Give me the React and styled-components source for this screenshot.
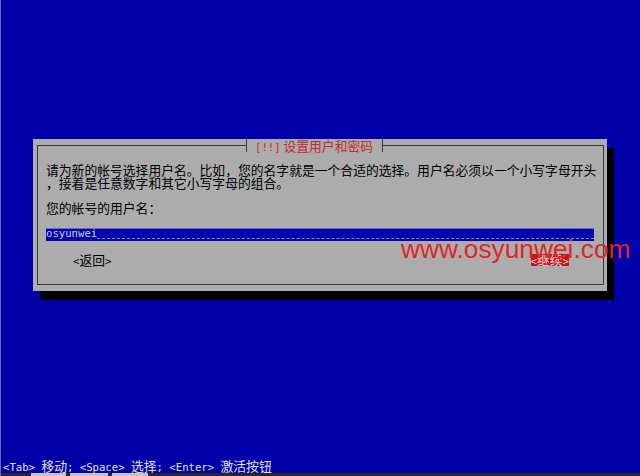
import React from "react";
import styled, { createGlobalStyle } from "styled-components";

const GlobalStyle = createGlobalStyle`
  html, body {
    margin: 0;
    padding: 0;
    background: #0000a8;
  }
  * {
    box-sizing: border-box;
  }
`;

const CJK = `"Noto Sans CJK SC", "Noto Sans", sans-serif`;
const MONO = `"DejaVu Sans Mono", "Liberation Mono", monospace`;

const Page = styled.div`
  position: relative;
  width: 640px;
  height: 476px;
  overflow: hidden;
  background: #0000a8;
  border-left: 1px solid #6c6ca0;
  display: flex;
  flex-direction: column;
  font-family: ${CJK};
  font-size: 12.8px;
  line-height: 12.8px;
`;

const Dialog = styled.div`
  margin: 139px 0 0 32px;
  width: 574px;
  background: #acacac;
  padding: 6px 3px 6px 4px;
  box-shadow: 7px 9px 0 #000;
`;

const Frame = styled.div`
  position: relative;
  border: 1px solid #3a3a3a;
  padding: 18px 9px 18px 8px;
`;

/* title sits over the top border line, like a legend */
const Title = styled.div`
  position: absolute;
  top: -7px;
  left: 208px;
  height: 13px;
  padding: 0 9px 0 8px;
  background: #acacac;
  border-left: 1px solid #3a3a3a;
  border-right: 1px solid #3a3a3a;
  color: #c42a2a;
  white-space: nowrap;
  line-height: 13px;
`;

const Mono = styled.span`
  font-family: ${MONO};
  font-size: 10.63px;
`;

const Text = styled.div`
  color: #000;
  white-space: nowrap;
  margin-bottom: ${p => (p.$gap ? "12.8px" : "0")};
`;

const Entry = styled.div`
  display: flex;
  align-items: stretch;
  height: 12.8px;
  margin-right: 0;
  background: #0404ac;
  box-shadow: inset 0 1px 0 #6a6ad0;
  margin-bottom: 12.8px;
`;

const EntryValue = styled.span`
  font-family: ${MONO};
  font-size: 10.63px;
  line-height: 12.8px;
  color: #c8c8e6;
`;

const EntryFill = styled.span`
  flex: 1;
  border-bottom: 1px dashed #8c8cd8;
  margin-bottom: 2px;
`;

const Buttons = styled.div`
  display: flex;
  justify-content: space-between;
  padding: 0 25px 0 27px;
`;

const Button = styled.span`
  height: 12.8px;
  white-space: nowrap;
  color: ${p => (p.$active ? "#f2d8d8" : "#000")};
  background: ${p => (p.$active ? "#c01818" : "transparent")};
`;

const Spacer = styled.div`
  flex: 1;
`;

const Status = styled.div`
  padding-left: 2px;
  color: #e2e2e2;
  white-space: pre;
  height: 12.8px;
`;

const Taskbar = styled.div`
  display: flex;
  gap: 4px;
  height: 3px;
  background: #262630;
  padding-left: 30px;
`;

const TaskItem = styled.div`
  width: ${p => p.$w}px;
  background: #c4c4c4;
`;

const Watermark = styled.div`
  position: absolute;
  left: 400px;
  top: 236px;
  font-family: "Liberation Sans", Arial, sans-serif;
  font-size: 26.3px;
  line-height: 26px;
  color: #e02626;
  white-space: nowrap;
`;

export default function App() {
  return (
    <>
      <GlobalStyle />
      <Page>
        <Dialog>
          <Frame>
            <Title>
              <Mono>[!!]</Mono> 设置用户和密码
            </Title>
            <Text>请为新的帐号选择用户名。比如，您的名字就是一个合适的选择。用户名必须以一个小写字母开头</Text>
            <Text $gap>，接着是任意数字和其它小写字母的组合。</Text>
            <Text $gap>您的帐号的用户名：</Text>
            <Entry>
              <EntryValue>osyunwei</EntryValue>
              <EntryFill />
            </Entry>
            <Buttons>
              <Button>
                <Mono>&lt;</Mono>返回<Mono>&gt;</Mono>
              </Button>
              <Button $active>
                <Mono>&lt;</Mono>继续<Mono>&gt;</Mono>
              </Button>
            </Buttons>
          </Frame>
        </Dialog>
        <Spacer />
        <Status>
          <Mono>&lt;Tab&gt; </Mono>移动<Mono>; &lt;Space&gt; </Mono>选择<Mono>; &lt;Enter&gt; </Mono>激活按钮
        </Status>
        <Taskbar>
          <TaskItem $w={35} />
          <TaskItem $w={38} />
          <TaskItem $w={36} />
        </Taskbar>
        <Watermark>www.osyunwei.com</Watermark>
      </Page>
    </>
  );
}
